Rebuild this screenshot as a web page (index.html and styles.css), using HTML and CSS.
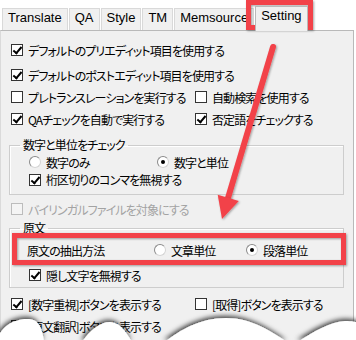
FILE: index.html
```html
<!DOCTYPE html>
<html lang="ja">
<head>
  <meta charset="UTF-8" />
  <meta name="viewport" content="width=device-width, initial-scale=1.0"/>
  <title>Setting</title>
  <link rel="stylesheet" href="styles.css">
</head>
<body>
  <div class="window">
    <div class="tabs">
      <div class="tab">Translate</div>
      <div class="tab">QA</div>
      <div class="tab">Style</div>
      <div class="tab">TM</div>
      <div class="tab">Memsource</div>
      <div class="tab active">Setting</div>
    </div>

    <div class="panel">
      <div class="row first"><span class="check on"></span>デフォルトのプリエディット項目を使用する</div>
      <div class="row second"><span class="check on"></span>デフォルトのポストエディット項目を使用する</div>
      <div class="row cols">
        <div class="opt"><span class="check"></span>プレトランスレーションを実行する</div>
        <div class="opt"><span class="check"></span>自動検索を使用する</div>
      </div>
      <div class="row cols">
        <div class="opt"><span class="check on"></span>QAチェックを自動で実行する</div>
        <div class="opt"><span class="check on"></span>否定語をチェックする</div>
      </div>

      <fieldset class="group numbers">
        <legend>数字と単位をチェック</legend>
        <div class="radios">
          <div class="opt"><span class="radio"></span>数字のみ</div>
          <div class="opt"><span class="radio on"></span>数字と単位</div>
        </div>
        <div class="opt sub"><span class="check on"></span>桁区切りのコンマを無視する</div>
      </fieldset>

      <div class="row disabled"><span class="check"></span>バイリンガルファイルを対象にする</div>

      <fieldset class="group source">
        <legend>原文</legend>
        <div class="method">
          <div class="opt caption">原文の抽出方法</div>
          <div class="opt"><span class="radio"></span>文章単位</div>
          <div class="opt"><span class="radio on"></span>段落単位</div>
        </div>
        <div class="opt hidden-text"><span class="check on"></span>隠し文字を無視する</div>
      </fieldset>

      <div class="row cols buttons">
        <div class="opt"><span class="check on"></span>[数字重視]ボタンを表示する</div>
        <div class="opt"><span class="check"></span>[取得]ボタンを表示する</div>
      </div>
      <div class="row cols">
        <div class="opt"><span class="check"></span>[原文翻訳]ボタンを表示する</div>
      </div>
    </div>
  </div>

  <!-- annotations drawn over the screenshot -->
  <svg class="marks" width="356" height="340" viewBox="0 0 356 340">
    <defs>
      <filter id="soft" x="-10%" y="-10%" width="130%" height="130%">
        <feDropShadow dx="1" dy="1" stdDeviation="1" flood-color="#000" flood-opacity="0.35"/>
      </filter>
    </defs>
    <g fill="none" stroke="#f2434a" stroke-width="5" filter="url(#soft)">
      <rect x="248.5" y="2.5" width="62" height="25"/>
      <rect x="14.5" y="235.5" width="329" height="27"/>
      <line x1="273" y1="47" x2="228" y2="198" stroke-width="6" stroke-linecap="round"/>
    </g>
    <polygon points="222,219 217.7,194.8 238.8,201" fill="#f2434a" filter="url(#soft)"/>
  </svg>

  <svg class="torn" width="356" height="34" viewBox="0 306 356 34">
    <defs>
      <filter id="edge" x="-10%" y="-60%" width="120%" height="180%">
        <feDropShadow dx="-1" dy="-2" stdDeviation="2.5" flood-color="#000" flood-opacity="0.75"/>
      </filter>
    </defs>
    <g fill="#fff" filter="url(#edge)">
      <path d="M-4,342 C0,328 12,319 27,319 C38,319 42,326 44,342 Z"/>
      <path d="M82,342 C90,330 100,322 110,322 C120,322 126,332 132,342 Z"/>
      <path d="M165,342 C180,330 200,318 226,318 C252,318 272,332 287,342 Z"/>
      <path d="M298,342 C312,332 330,322 345,321 C352,321 356,322 360,323 L360,342 Z"/>
    </g>
  </svg>
</body>
</html>
```

FILE: styles.css
```css
* {
  box-sizing: border-box;
  margin: 0;
  padding: 0;
}

body {
  position: relative;
  width: 356px;
  height: 340px;
  overflow: hidden;
  background: #fff;
  color: #000;
  font-family: "Noto Sans CJK JP", sans-serif;
  font-size: 12px;
  font-feature-settings: "palt";
  letter-spacing: -0.9px;
}

.window {
  width: 354px;
}

/* tab strip */
.tabs {
  display: flex;
  align-items: flex-end;
  height: 30px;
  padding-left: 2px;
  gap: 1px;
}

.tab {
  height: 22px;
  padding: 0 5px;
  border: 1px solid #d9d9d9;
  border-bottom: none;
  background: #f0f0f0;
  font-family: "Liberation Sans", Arial, sans-serif;
  font-size: 13px;
  line-height: 18px;
  letter-spacing: 0;
  color: #000;
}

.tab.active {
  position: relative;
  z-index: 1;
  height: 25px;
  margin-bottom: -1px;
  border-color: #b9b9b9;
}

/* page body */
.panel {
  height: 310px;
  padding: 8px 0 0 10px;
  background: #f0f0f0;
  border: 1px solid #b9b9b9;
  border-left-color: #dadada;
  border-bottom: none;
}

.row {
  display: flex;
  align-items: center;
  height: 22px;
}

.row.second {
  margin-top: 3px;
}

.cols {
  display: grid;
  grid-template-columns: 184px 1fr;
}

.opt {
  display: flex;
  align-items: center;
  white-space: nowrap;
}

/* checkbox and radio */
.check {
  position: relative;
  flex: none;
  width: 12px;
  height: 12px;
  margin-right: 5px;
  border: 1px solid #333;
  background: #fff;
}

.check.on::after {
  content: "";
  position: absolute;
  left: 3px;
  top: 0;
  width: 3px;
  height: 7px;
  border: solid #000;
  border-width: 0 2px 2px 0;
  transform: rotate(40deg);
}

.radio {
  position: relative;
  flex: none;
  width: 12px;
  height: 12px;
  margin-right: 5px;
  border: 1px solid;
  border-color: #8a8a8a #d4d4d4 #d4d4d4 #8a8a8a;
  border-radius: 50%;
  background: #fff;
}

.radio.on::after {
  content: "";
  position: absolute;
  left: 3px;
  top: 3px;
  width: 4px;
  height: 4px;
  border-radius: 50%;
  background: #000;
}

/* group boxes */
.group {
  width: 335px;
  margin-left: -2px;
  padding: 0 8px 6px 10px;
  border: 1px solid #cdcdcd;
  box-shadow: inset 1px 1px 0 #fff;
}

.group legend {
  padding: 0 3px;
  line-height: 16px;
}

.numbers {
  margin-top: 7px;
}

.radios {
  display: grid;
  grid-template-columns: 128px 1fr;
  height: 18px;
  padding-left: 9px;
}

.sub {
  height: 17px;
  padding-left: 9px;
}

.disabled {
  margin-top: 3px;
  color: #a3a3a3;
}

.disabled .check {
  border-color: #bcbcbc;
  background: #f4f4f4;
}

.source {
  padding-bottom: 1px;
}

.method {
  display: grid;
  grid-template-columns: 125px 92px 1fr;
  height: 28px;
  padding-left: 9px;
}

.caption {
  margin-left: -2px;
}

.hidden-text {
  height: 22px;
  padding-left: 9px;
}

.buttons {
  margin-top: 5px;
}

/* overlays */
.marks {
  position: absolute;
  top: 0;
  left: 0;
  pointer-events: none;
}

.torn {
  position: absolute;
  left: 0;
  bottom: 0;
  pointer-events: none;
}
```
